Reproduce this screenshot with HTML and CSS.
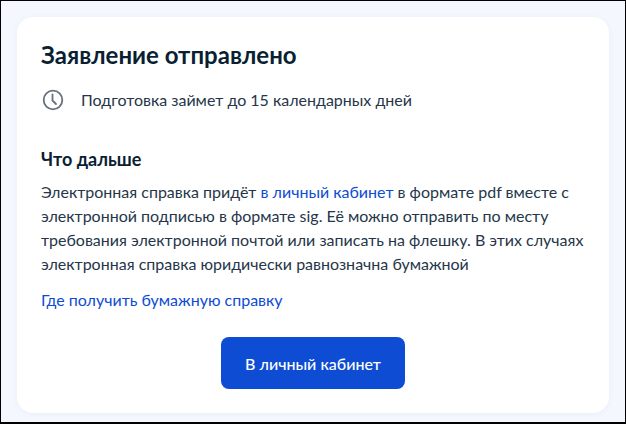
FILE: index.html
```html
<!DOCTYPE html>
<html>
<head>
  <title>Заявление отправлено</title>
  <link rel="stylesheet" href="styles.css">
</head>
<body>
  <div class="window">
    <div class="card">
      <h2>Заявление отправлено</h2>
      <div class="status">
        <svg class="clock" width="24" height="24" viewBox="0 0 24 24" fill="none">
          <circle cx="12" cy="12" r="9.3" stroke="#66727f" stroke-width="1.8"/>
          <path d="M11.5 6.5V12.5L15 16" stroke="#66727f" stroke-width="1.8" stroke-linecap="round" stroke-linejoin="round"/>
        </svg>
        <span>Подготовка займет до 15 календарных дней</span>
      </div>
      <h3>Что дальше</h3>
      <p>Электронная справка придёт <a href="#">в личный кабинет</a> в формате pdf вместе с электронной подписью в формате sig. Её можно отправить по месту требования электронной почтой или записать на флешку. В этих случаях электронная справка юридически равнозначна бумажной</p>
      <a class="paper-link" href="#">Где получить бумажную справку</a>
      <div class="actions">
        <button>В личный кабинет</button>
      </div>
    </div>
  </div>
</body>
</html>
```

FILE: styles.css
```css
html, body {
  margin: 0;
  padding: 0;
}

body {
  width: 626px;
  height: 424px;
  overflow: hidden;
  font-family: Lato, "Noto Sans", sans-serif;
  color: #0b1f33;
}

.window {
  box-sizing: border-box;
  width: 626px;
  height: 424px;
  padding: 16px 16px 9px 16px;
  background-color: #f5f7fe;
  border: 1px solid #000;
  border-bottom-width: 2px;
}

.card {
  box-sizing: border-box;
  height: 396px;
  padding: 23px 24px 0 24px;
  background-color: #fff;
  border-radius: 16px;
  box-shadow: 0 1px 4px rgba(228, 236, 248, 0.8);
}

h2 {
  margin: 0;
  font-size: 24px;
  line-height: 30px;
  font-weight: 700;
}

.status {
  display: flex;
  align-items: center;
  gap: 16px;
  margin-top: 18px;
  font-size: 16px;
  line-height: 24px;
  color: #26364a;
}

.clock {
  flex-shrink: 0;
}

h3 {
  margin: 35px 0 0 0;
  font-size: 18px;
  line-height: 24px;
  font-weight: 700;
}

p {
  margin: 9px 0 0 0;
  font-size: 16px;
  line-height: 24px;
  color: #26364a;
}

a {
  color: #0d4cd3;
  text-decoration: none;
}

.paper-link {
  display: block;
  margin-top: 12px;
  font-size: 16px;
  line-height: 24px;
}

.actions {
  display: flex;
  justify-content: center;
  margin-top: 25px;
}

button {
  width: 184px;
  height: 52px;
  padding: 0;
  background-color: #0d4cd3;
  color: #fff;
  border: none;
  border-radius: 8px;
  font-family: inherit;
  font-size: 16px;
  font-weight: 500;
}
```
